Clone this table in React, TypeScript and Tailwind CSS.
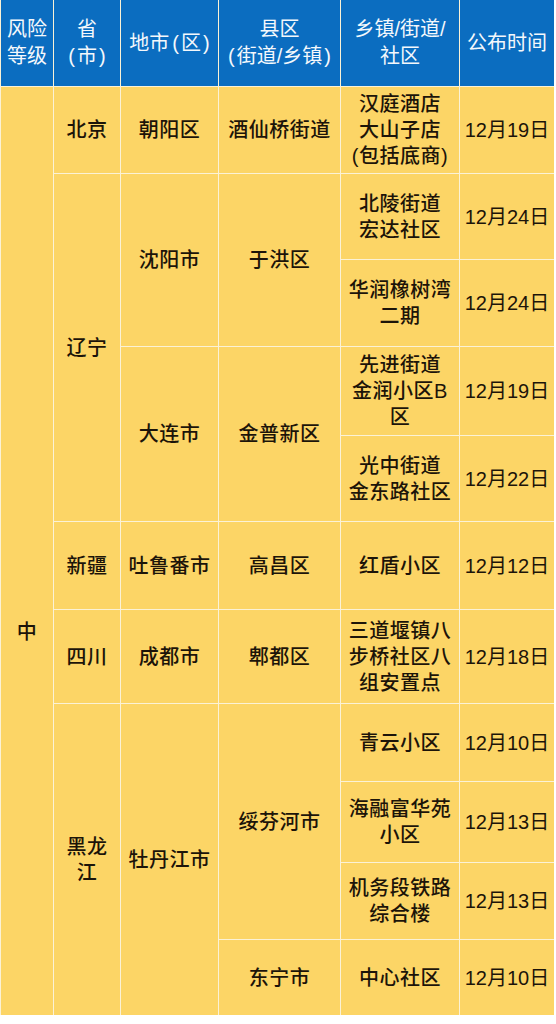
import type { ReactNode } from "react"

type CellProps = {
  children?: ReactNode
  span?: string
  head?: boolean
  className?: string
}

function Cell({ children, span = "", head = false, className = "" }: CellProps) {
  return (
    <div
      className={`flex items-center justify-center text-center ${
        head
          ? "bg-[#0b6dc0] text-[#f4f8fc] leading-[27px]"
          : "bg-[#fcd566] text-[#1c1409] font-medium leading-[26px] tracking-[0.5px]"
      } ${span} ${className}`}
    >
      <div>{children}</div>
    </div>
  )
}

// publish date column, thinner digits than the place names
function DateCell({ children }: { children: ReactNode }) {
  return (
    <div className="flex items-center justify-center bg-[#fcd566] text-center text-[#1c1409] leading-[26px]">
      <div>{children}</div>
    </div>
  )
}

export default function App() {
  return (
    <div
      className="min-h-screen bg-white text-[20px]"
      style={{ fontFamily: '"Liberation Sans", "Noto Sans CJK SC", sans-serif' }}
    >
      <div className="grid w-[554px] grid-cols-[52px_66px_97px_121px_118px_94px] grid-rows-[86px_86px_85px_86px_88px_85px_87px_93px_77px_80px_76px_75px] gap-px bg-[#fbf2d6] pl-px">
        {/* header */}
        <Cell head>
          风险
          <br />
          等级
        </Cell>
        <Cell head>
          省
          <br />
          <span className="mr-[2px]">(</span>市<span className="ml-[2px]">)</span>
        </Cell>
        <Cell head>
          地市<span className="ml-[3px] mr-[2px]">(</span>区<span className="ml-[2px]">)</span>
        </Cell>
        <Cell head>
          县区
          <br />
          <span className="mr-[2px]">(</span>街道/乡镇<span className="ml-[2px]">)</span>
        </Cell>
        <Cell head>
          乡镇/街道/
          <br />
          社区
        </Cell>
        <Cell head>公布时间</Cell>

        {/* 北京 */}
        <Cell span="row-span-11" className="pt-[162px]">
          中
        </Cell>
        <Cell>北京</Cell>
        <Cell>朝阳区</Cell>
        <Cell>酒仙桥街道</Cell>
        <Cell>
          汉庭酒店
          <br />
          大山子店
          <br />
          (包括底商)
        </Cell>
        <DateCell>12月19日</DateCell>

        {/* 辽宁 沈阳 */}
        <Cell span="row-span-4">辽宁</Cell>
        <Cell span="row-span-2">沈阳市</Cell>
        <Cell span="row-span-2">于洪区</Cell>
        <Cell>
          北陵街道
          <br />
          宏达社区
        </Cell>
        <DateCell>12月24日</DateCell>

        <Cell>
          华润橡树湾
          <br />
          二期
        </Cell>
        <DateCell>12月24日</DateCell>

        {/* 辽宁 大连 */}
        <Cell span="row-span-2">大连市</Cell>
        <Cell span="row-span-2">金普新区</Cell>
        <Cell>
          先进街道
          <br />
          金润小区B
          <br />区
        </Cell>
        <DateCell>12月19日</DateCell>

        <Cell>
          光中街道
          <br />
          金东路社区
        </Cell>
        <DateCell>12月22日</DateCell>

        {/* 新疆 */}
        <Cell>新疆</Cell>
        <Cell>吐鲁番市</Cell>
        <Cell>高昌区</Cell>
        <Cell>红盾小区</Cell>
        <DateCell>12月12日</DateCell>

        {/* 四川 */}
        <Cell>四川</Cell>
        <Cell>成都市</Cell>
        <Cell>郫都区</Cell>
        <Cell>
          三道堰镇八
          <br />
          步桥社区八
          <br />
          组安置点
        </Cell>
        <DateCell>12月18日</DateCell>

        {/* 黑龙江 */}
        <Cell span="row-span-4">
          黑龙
          <br />江
        </Cell>
        <Cell span="row-span-4">牡丹江市</Cell>
        <Cell span="row-span-3">绥芬河市</Cell>
        <Cell>青云小区</Cell>
        <DateCell>12月10日</DateCell>

        <Cell>
          海融富华苑
          <br />
          小区
        </Cell>
        <DateCell>12月13日</DateCell>

        <Cell>
          机务段铁路
          <br />
          综合楼
        </Cell>
        <DateCell>12月13日</DateCell>

        <Cell>东宁市</Cell>
        <Cell>中心社区</Cell>
        <DateCell>12月10日</DateCell>
      </div>
    </div>
  )
}
